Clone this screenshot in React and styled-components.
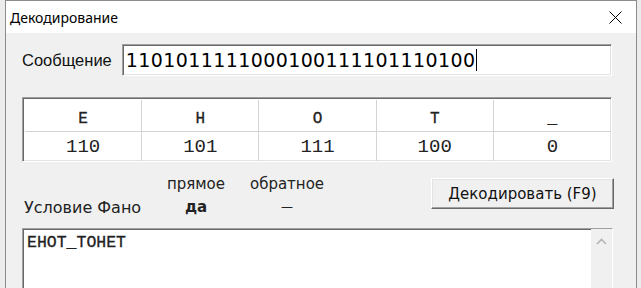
import styled, { createGlobalStyle } from "styled-components";

const Global = createGlobalStyle`
  html, body {
    margin: 0;
    padding: 0;
    background: #ececec;
    overflow: hidden;
  }
`;

const mono = `"Courier New", "Nimbus Mono PS", "Nimbus Mono L", FreeMono, "Liberation Mono", monospace`;

const Window = styled.div`
  margin-left: 5px;
  width: 630px;
  height: 300px;
  border: 1px solid #8c8c8c;
  border-bottom: none;
  display: flex;
  flex-direction: column;
  background: #f0f0f0;
`;

const TitleBar = styled.div`
  height: 32px;
  flex: none;
  background: #fff;
  display: flex;
  align-items: center;
  padding-left: 4px;
  font-family: "Noto Sans", sans-serif;
  font-size: 14px;
  color: #000;
`;

const Close = styled.div`
  margin-left: auto;
  width: 42px;
  height: 32px;
  display: flex;
  align-items: center;
  justify-content: center;
`;

const Body = styled.div`
  flex: 1;
  padding: 11px 24px 0 16px;
  display: flex;
  flex-direction: column;
  font-family: "Liberation Sans", Arial, sans-serif;
  font-size: 16px;
  color: #000;
`;

const MessageRow = styled.div`
  display: flex;
  align-items: center;
  gap: 10px;
`;

const Label = styled.span`
  font-size: 16.5px;
  color: #111;
`;

const sunken = `
  border-top: 1px solid #a0a0a0;
  border-left: 1px solid #a0a0a0;
  border-right: 1px solid #fff;
  border-bottom: 1px solid #fff;
  box-shadow: inset 1px 1px 0 #696969, inset -1px -1px 0 #e3e3e3;
  background: #fff;
`;

const Input = styled.div`
  ${sunken}
  flex: 1;
  height: 32px;
  box-sizing: border-box;
  display: flex;
  align-items: center;
  padding-left: 3px;
  font-family: "DejaVu Sans", Verdana, sans-serif;
  font-size: 19px;
  letter-spacing: 0.4px;
  color: #000;
`;

const Caret = styled.span`
  display: inline-block;
  width: 1px;
  height: 22px;
  background: #000;
  margin-left: 1px;
`;

const Table = styled.div`
  ${sunken}
  margin-top: 21px;
  display: grid;
  grid-template-columns: repeat(5, 1fr);
  height: 65px;
  box-sizing: border-box;
  padding: 2px 0 0 2px;
  font-family: ${mono};
`;

const Cell = styled.div`
  display: flex;
  align-items: center;
  justify-content: center;
  padding-top: ${(p) => (p.$head ? "6px" : "0")};
  border-right: ${(p) => (p.$last ? "none" : "1px solid #d4d4d4")};
  border-bottom: ${(p) => (p.$head ? "1px solid #d4d4d4" : "none")};
  font-size: ${(p) => (p.$head ? "16px" : "19px")};
  color: #222;
  -webkit-text-stroke: ${(p) => (p.$head ? "0.3px #222" : "0")};
`;

const FanoRow = styled.div`
  margin-top: 13px;
  display: flex;
  align-items: flex-start;
`;

const FanoLabel = styled.div`
  width: 139px;
  padding-top: 23px;
  padding-left: 2px;
  font-family: "DejaVu Sans", Tahoma, sans-serif;
  font-size: 16px;
  color: #222;
`;

const FanoCol = styled.div`
  width: ${(p) => p.$w}px;
  margin-left: ${(p) => p.$offset || 0}px;
  display: flex;
  flex-direction: column;
  align-items: center;
  gap: 5px;
  font-family: "DejaVu Sans", Tahoma, sans-serif;
  font-size: 15px;
  color: #222;
`;

const Value = styled.div`
  font-weight: ${(p) => (p.$bold ? 700 : 400)};
  font-size: ${(p) => (p.$bold ? "15px" : "12px")};
  line-height: 18px;
`;

const Button = styled.button`
  margin-left: auto;
  margin-right: -2px;
  margin-top: 3px;
  width: 183px;
  height: 31px;
  background: #f0f0f0;
  border-top: 1px solid #fff;
  border-left: 1px solid #fff;
  border-right: 1px solid #696969;
  border-bottom: 1px solid #696969;
  box-shadow: inset -1px -1px 0 #a0a0a0, inset 1px 1px 0 #e3e3e3;
  font-family: "DejaVu Sans", Tahoma, sans-serif;
  font-size: 15px;
  color: #111;
  padding: 0;
`;

const Output = styled.div`
  ${sunken}
  margin-top: 11px;
  margin-right: -1px;
  flex: 1;
  display: flex;
`;

const OutputText = styled.div`
  flex: 1;
  padding: 4px 0 0 4px;
  font-family: ${mono};
  font-size: 16.5px;
  color: #222;
  -webkit-text-stroke: 0.3px #222;
`;

const Scrollbar = styled.div`
  width: 21px;
  background: #f0f0f0;
  display: flex;
  justify-content: center;
  padding-top: 9px;
`;

const letters = ["Е", "Н", "О", "Т", "_"];
const codes = ["110", "101", "111", "100", "0"];

export default function App() {
  return (
    <>
      <Global />
      <Window>
        <TitleBar>
          Декодирование
          <Close>
            <svg width="13" height="13" viewBox="0 0 13 13">
              <path d="M0.5 0.5L12.5 12.5M12.5 0.5L0.5 12.5" stroke="#000" strokeWidth="1" />
            </svg>
          </Close>
        </TitleBar>
        <Body>
          <MessageRow>
            <Label>Сообщение</Label>
            <Input>
              1101011111000100111101110100
              <Caret />
            </Input>
          </MessageRow>
          <Table>
            {letters.map((l, i) => (
              <Cell key={"h" + i} $head $last={i === 4}>
                {l}
              </Cell>
            ))}
            {codes.map((c, i) => (
              <Cell key={"c" + i} $last={i === 4}>
                {c}
              </Cell>
            ))}
          </Table>
          <FanoRow>
            <FanoLabel>Условие Фано</FanoLabel>
            <FanoCol $w={66}>
              <span>прямое</span>
              <Value $bold>да</Value>
            </FanoCol>
            <FanoCol $w={94} $offset={11}>
              <span>обратное</span>
              <Value>—</Value>
            </FanoCol>
            <Button>Декодировать (F9)</Button>
          </FanoRow>
          <Output>
            <OutputText>ЕНОТ_ТОНЕТ</OutputText>
            <Scrollbar>
              <svg width="11" height="7" viewBox="0 0 11 7">
                <path d="M1 6L5.5 1.5L10 6" stroke="#b5b5b5" strokeWidth="1.6" fill="none" />
              </svg>
            </Scrollbar>
          </Output>
        </Body>
      </Window>
    </>
  );
}
